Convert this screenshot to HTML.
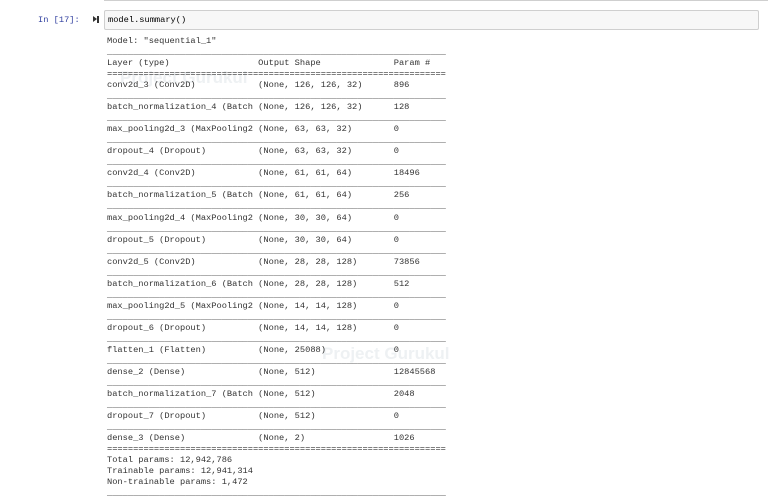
<!DOCTYPE html>
<html><head><style>
body{margin:0;background:#fff;width:768px;height:503px;overflow:hidden;position:relative;font-family:"Liberation Mono",monospace}
.top{position:absolute;left:104px;top:0;width:664px;height:1px;background:#cfcfcf}
.prompt{position:absolute;left:38px;top:13px;font-size:8.7px;color:#303f9f;line-height:14px}
.run{position:absolute;left:93px;top:16px;width:0;height:0;border-top:3.5px solid transparent;border-bottom:3.5px solid transparent;border-left:4px solid #333}
.run2{position:absolute;left:97px;top:16px;width:1.5px;height:7px;background:#333}
.inp{position:absolute;left:104px;top:10px;width:655px;height:20px;background:#f7f7f7;border:1px solid #cfcfcf;border-radius:2px;box-sizing:border-box}
.inp span{position:absolute;left:3px;top:3px;font-size:8.7px;line-height:12px;color:#000}
pre{position:absolute;left:107px;top:36px;margin:0;font-family:"Liberation Mono",monospace;font-size:8.7px;line-height:11.03px;color:#333}
.wm{position:absolute;font-family:"Liberation Sans",sans-serif;font-size:17px;color:#eef1f3;font-weight:bold}
</style></head><body>
<div class="top"></div>
<div class="prompt">In [17]:</div>
<div class="run"></div><div class="run2"></div>
<div class="inp"><span>model.summary()</span></div>
<div class="wm" style="left:120px;top:68px">Project Gurukul</div>
<div class="wm" style="left:322px;top:344px">Project Gurukul</div>
<pre>Model: "sequential_1"
_________________________________________________________________
Layer (type)                 Output Shape              Param #   
=================================================================
conv2d_3 (Conv2D)            (None, 126, 126, 32)      896       
_________________________________________________________________
batch_normalization_4 (Batch (None, 126, 126, 32)      128       
_________________________________________________________________
max_pooling2d_3 (MaxPooling2 (None, 63, 63, 32)        0         
_________________________________________________________________
dropout_4 (Dropout)          (None, 63, 63, 32)        0         
_________________________________________________________________
conv2d_4 (Conv2D)            (None, 61, 61, 64)        18496     
_________________________________________________________________
batch_normalization_5 (Batch (None, 61, 61, 64)        256       
_________________________________________________________________
max_pooling2d_4 (MaxPooling2 (None, 30, 30, 64)        0         
_________________________________________________________________
dropout_5 (Dropout)          (None, 30, 30, 64)        0         
_________________________________________________________________
conv2d_5 (Conv2D)            (None, 28, 28, 128)       73856     
_________________________________________________________________
batch_normalization_6 (Batch (None, 28, 28, 128)       512       
_________________________________________________________________
max_pooling2d_5 (MaxPooling2 (None, 14, 14, 128)       0         
_________________________________________________________________
dropout_6 (Dropout)          (None, 14, 14, 128)       0         
_________________________________________________________________
flatten_1 (Flatten)          (None, 25088)             0         
_________________________________________________________________
dense_2 (Dense)              (None, 512)               12845568  
_________________________________________________________________
batch_normalization_7 (Batch (None, 512)               2048      
_________________________________________________________________
dropout_7 (Dropout)          (None, 512)               0         
_________________________________________________________________
dense_3 (Dense)              (None, 2)                 1026      
=================================================================
Total params: 12,942,786
Trainable params: 12,941,314
Non-trainable params: 1,472
_________________________________________________________________</pre>
</body></html>
